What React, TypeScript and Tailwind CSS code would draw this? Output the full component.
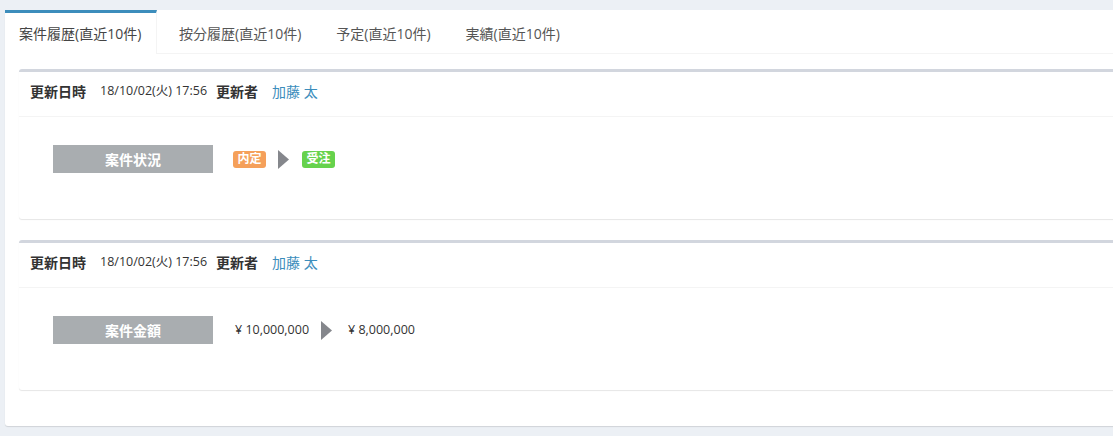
const tabs = ["案件履歴(直近10件)", "按分履歴(直近10件)", "予定(直近10件)", "実績(直近10件)"]

function Arrow() {
  return (
    <svg width="11" height="19" viewBox="0 0 11 19" className="shrink-0 block">
      <polygon points="0,0 11,9.5 0,19" fill="#85878c" />
    </svg>
  )
}

function HistoryCard({ label, children }: { label: string; children: React.ReactNode }) {
  return (
    <div className="bg-white border-t-[3px] border-[#d2d6de] rounded-[3px] shadow-[0_1px_1px_rgba(0,0,0,0.1)] mb-[21px]">
      <div className="flex items-center h-[45px] pb-[5px] px-[11px] border-b border-[#f4f4f4] text-[#333]">
        <span className="text-[14px] font-bold">更新日時</span>
        <span className="text-[12.5px] ml-[14px]">18/10/02(火) 17:56</span>
        <span className="text-[14px] font-bold ml-[9px]">更新者</span>
        <span className="text-[14px] text-[#3c8dbc] ml-[14px]">加藤 太</span>
      </div>
      <div className="h-[102px] pl-[34px] pt-[28px]">
        <div className="flex items-center">
          <div className="w-[160px] h-[28px] bg-[#a9adb0] text-white text-[14px] font-bold flex items-center justify-center">
            {label}
          </div>
          {children}
        </div>
      </div>
    </div>
  )
}

export default function App() {
  return (
    <div
      className="w-[1113px] h-[436px] overflow-hidden bg-[#ecf0f5] pt-[10px] pl-[5px]"
      style={{ fontFamily: '"Open Sans", "Noto Sans CJK JP", sans-serif' }}
    >
      <div className="w-[1130px] h-[416px] bg-white rounded-[3px] shadow-[0_1px_1px_rgba(0,0,0,0.12)]">
        <div className="flex border-b border-[#f4f4f4] h-[44px]">
          {tabs.map((t, i) => (
            <div
              key={t}
              className={
                i === 0
                  ? "w-[152px] h-[44px] border-t-[3px] border-[#3c8dbc] border-r border-r-[#f4f4f4] bg-white flex items-center pl-[14px] pb-[1px] text-[14px] text-[#444] -mb-px mr-[7px]"
                  : "h-[44px] flex items-center px-[15px] mr-[5px] pt-[2px] text-[14px] text-[#555]"
              }
            >
              {t}
            </div>
          ))}
        </div>
        <div className="pt-[15px] pl-[14px]">
          <HistoryCard label="案件状況">
            <span className="ml-[20px] h-[17px] w-[33px] rounded-[3px] bg-[#f5a05a] text-white text-[12px] font-bold flex items-center justify-center">内定</span>
            <span className="ml-[12px]"><Arrow /></span>
            <span className="ml-[13px] h-[17px] w-[33px] rounded-[3px] bg-[#66d24c] text-white text-[12px] font-bold flex items-center justify-center">受注</span>
          </HistoryCard>
          <HistoryCard label="案件金額">
            <span className="ml-[22px] text-[12.5px] text-[#333]">¥ 10,000,000</span>
            <span className="ml-[12px]"><Arrow /></span>
            <span className="ml-[16px] text-[12.5px] text-[#333]">¥ 8,000,000</span>
          </HistoryCard>
        </div>
      </div>
    </div>
  )
}
